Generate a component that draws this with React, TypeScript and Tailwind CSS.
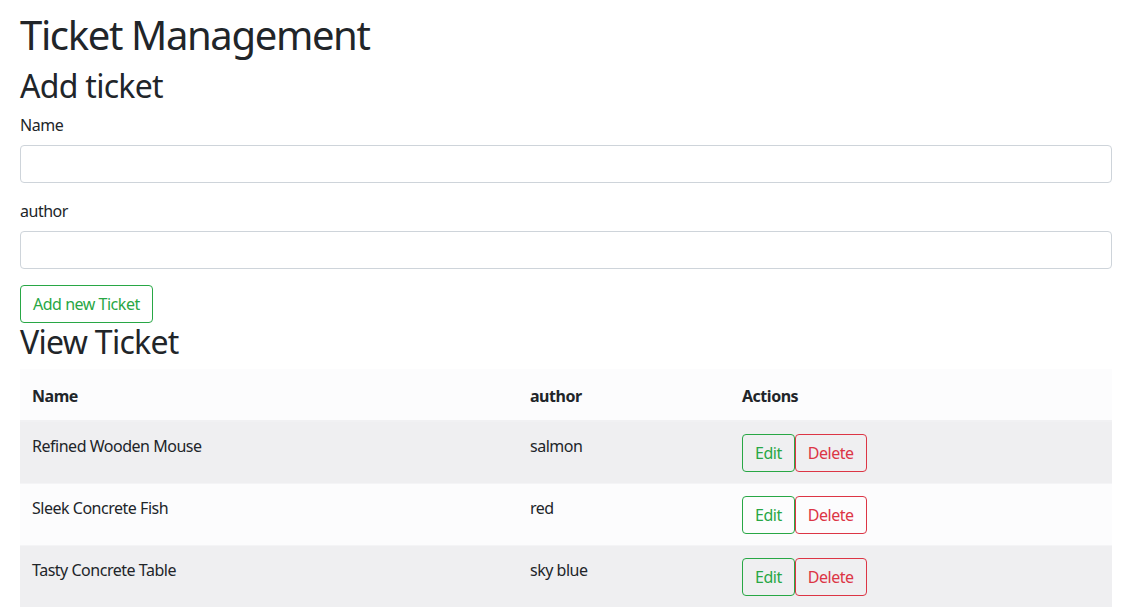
const tickets = [
  { name: "Refined Wooden Mouse", author: "salmon" },
  { name: "Sleek Concrete Fish", author: "red" },
  { name: "Tasty Concrete Table", author: "sky blue" },
];

const inputClass =
  "block h-[38px] w-full rounded-[4px] border border-[#ced4da] bg-white px-3 text-base text-[#495057]";
const btnBase =
  "h-[38px] rounded-[4px] border bg-transparent px-3 text-base leading-6";
const thClass = "border-b-2 border-[#f1f1f3] px-3 pt-[15px] pb-3 align-bottom font-bold";
const tdClass = "border-t border-[#f4f4f6] px-3 pt-3 pb-[11px] align-top";

export default function App() {
  return (
    <div className="px-5 pt-[11px] text-base leading-6 tracking-[-0.03em] text-[#212529] font-['Noto_Sans',sans-serif]">
      <h1 className="mb-2 text-[40px] leading-[48px] font-normal tracking-[-0.034em]">
        Ticket Management
      </h1>
      <h2 className="mb-2 text-[32px] leading-[38px] font-normal tracking-[-0.022em]">Add ticket</h2>

      <div className="mb-4">
        <label className="mb-2 block">Name</label>
        <input type="text" className={inputClass} />
      </div>
      <div className="mb-4">
        <label className="mb-2 block">author</label>
        <input type="text" className={inputClass} />
      </div>
      <button type="button" className={`${btnBase} border-[#28a745] text-[#28a745]`}>
        Add new Ticket
      </button>

      <h2 className="mb-2 text-[32px] leading-[38px] font-normal tracking-[-0.022em]">View Ticket</h2>

      <table className="w-full border-collapse text-left">
        <thead>
          <tr className="bg-[#fcfcfd]">
            <th className={thClass}>Name</th>
            <th className={thClass}>author</th>
            <th className={thClass}>Actions</th>
          </tr>
        </thead>
        <tbody>
          {tickets.map((t, i) => (
            <tr key={t.name} className={i % 2 === 0 ? "bg-[#efeff1]" : "bg-[#fcfcfd]"}>
              <td className={`w-[498px] ${tdClass}`}>{t.name}</td>
              <td className={`w-[212px] ${tdClass}`}>{t.author}</td>
              <td className={tdClass}>
                <div className="flex">
                  <button type="button" className={`${btnBase} border-[#28a745] text-[#28a745]`}>
                    Edit
                  </button>
                  <button type="button" className={`${btnBase} border-[#dc3545] text-[#dc3545]`}>
                    Delete
                  </button>
                </div>
              </td>
            </tr>
          ))}
        </tbody>
      </table>
    </div>
  );
}
